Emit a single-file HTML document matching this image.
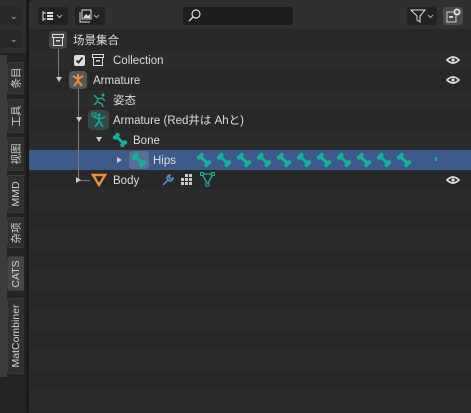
<!DOCTYPE html>
<html><head><meta charset="utf-8"><style>
*{margin:0;padding:0;box-sizing:border-box}
body{width:471px;height:413px;background:#1a1a1a;overflow:hidden;position:relative;font-family:"Liberation Sans","Noto Sans CJK SC",sans-serif;font-size:11.5px;color:#dcdcdc}
.a{position:absolute}
.row{position:absolute;left:29px;width:442px;height:20px}
.t{position:absolute;line-height:20px;white-space:nowrap;margin-top:1px}
.tab{position:absolute;left:7px;width:17px;background:#303030;border-radius:3px 0 0 3px;border:1px solid #3a3a3a;border-right:none}
.tab span{position:absolute;left:50%;top:50%;transform:translate(-50%,-50%) rotate(-90deg);white-space:nowrap;font-size:10.5px;color:#d0d0d0}
.eye{position:absolute;left:446px;width:14px;height:10px}
</style></head><body>
<svg width="0" height="0" style="position:absolute"><defs>
<g id="bone"><path d="M4 4 L12 12" stroke="#13b39b" stroke-width="3"/><circle cx="3" cy="5.5" r="2.2" fill="#13b39b"/><circle cx="5.5" cy="3" r="2.2" fill="#13b39b"/><circle cx="10.5" cy="13" r="2.2" fill="#13b39b"/><circle cx="13" cy="10.5" r="2.2" fill="#13b39b"/></g>
<g id="eye"><path d="M1 5 Q7 -1 13 5 Q7 11 1 5Z" fill="none" stroke="#e0e0e0" stroke-width="1.6"/><circle cx="7" cy="5" r="1.6" fill="#e0e0e0"/></g>
</defs></svg>
<!-- left strip -->
<div class="a" style="left:0;top:0;width:26px;height:413px;background:#232323"></div>
<div class="a" style="left:0;top:0;width:26px;height:53px;background:#2e2e2e"></div>
<div class="a" style="left:0;top:7px;width:22px;height:18px;background:#282828;border-radius:0 3px 3px 0;color:#bbb;font-size:9px;line-height:18px;padding-left:10px">⌄</div>
<div class="a" style="left:0;top:30px;width:22px;height:18px;background:#282828;border-radius:0 3px 3px 0;color:#bbb;font-size:9px;line-height:18px;padding-left:10px">⌄</div>
<div class="a" style="left:0;top:55px;width:7px;height:322px;background:#3c3c3c"></div>
<div class="tab" style="top:62px;height:32px"><span>条目</span></div>
<div class="tab" style="top:99px;height:34px"><span>工具</span></div>
<div class="tab" style="top:137px;height:34px"><span>视图</span></div>
<div class="tab" style="top:175px;height:38px"><span>MMD</span></div>
<div class="tab" style="top:217px;height:31px"><span>杂项</span></div>
<div class="tab" style="top:256px;height:35px;background:#454545"><span>CATS</span></div>
<div class="tab" style="top:298px;height:76px"><span>MatCombiner</span></div>
<!-- outliner -->
<div class="a" style="left:29px;top:0;width:442px;height:413px;background:#282828;border-radius:4px 0 0 0"></div>
<div class="a" style="left:29px;top:0;width:442px;height:29px;background:#303030;border-radius:4px 0 0 0"></div>
<div class="a" style="left:38px;top:7px;width:30px;height:18px;background:#222;border-radius:3px"></div>
<svg class="a" style="left:42px;top:10px" width="24" height="12"><path d="M1 1v10M1 3h3M1 9h3" stroke="#ddd" fill="none"/><rect x="5" y="2" width="6" height="2" fill="#ddd"/><rect x="5" y="5" width="6" height="2" fill="#ddd"/><rect x="5" y="8" width="6" height="2" fill="#ddd"/><path d="M15 5l2.5 2.5 2.5-2.5" stroke="#aaa" fill="none"/></svg>
<div class="a" style="left:75px;top:7px;width:30px;height:18px;background:#222;border-radius:3px"></div>
<svg class="a" style="left:79px;top:9px" width="24" height="14"><rect x="3" y="1" width="9" height="9" fill="none" stroke="#ddd"/><path d="M1 3v10h10" stroke="#ddd" fill="none"/><path d="M4 9l3-4 2 2 2-2v4z" fill="#ddd"/><path d="M15 6l2.5 2.5 2.5-2.5" stroke="#aaa" fill="none"/></svg>
<div class="a" style="left:183px;top:7px;width:110px;height:18px;background:#1d1d1d;border-radius:3px"></div>
<svg class="a" style="left:188px;top:9px" width="14" height="14"><circle cx="8" cy="5" r="4" fill="none" stroke="#ddd" stroke-width="1.2"/><path d="M5 8l-4 4" stroke="#ddd" stroke-width="1.4"/></svg>
<div class="a" style="left:407px;top:7px;width:30px;height:18px;background:#222;border-radius:3px"></div>
<svg class="a" style="left:410px;top:9px" width="26" height="14"><path d="M1 1h14l-5 6v6l-3-2v-4z" fill="none" stroke="#ddd"/><path d="M18 6l2.5 2.5 2.5-2.5" stroke="#aaa" fill="none"/></svg>
<div class="a" style="left:443px;top:7px;width:20px;height:18px;background:#4a4a4a;border-radius:3px"></div>
<svg class="a" style="left:445px;top:8px" width="18" height="16"><rect x="2" y="4" width="9" height="10" fill="none" stroke="#ccc"/><rect x="4" y="8" width="4" height="2" fill="#ccc"/><circle cx="12" cy="4" r="3.5" fill="#ddd"/><path d="M12 2v4M10 4h4" stroke="#333"/></svg>
<!-- rows -->
<div class="row" style="top:50px;background:#2b2b2b"></div>
<div class="row" style="top:90px;background:#2b2b2b"></div>
<div class="row" style="top:130px;background:#2b2b2b"></div>
<div class="row" style="top:150px;background:#3e5a8b"></div>
<div class="row" style="top:190px;background:#2b2b2b"></div>
<div class="row" style="top:230px;background:#2b2b2b"></div>
<div class="row" style="top:270px;background:#2b2b2b"></div>
<div class="row" style="top:310px;background:#2b2b2b"></div>
<div class="row" style="top:350px;background:#2b2b2b"></div>
<div class="row" style="top:390px;background:#2b2b2b"></div>
<!-- tree lines -->
<div class="a" style="left:58px;top:46px;width:1px;height:32px;background:#7a7a7a"></div>
<div class="a" style="left:78px;top:88px;width:1px;height:92px;background:#7a7a7a"></div>
<div class="a" style="left:78px;top:180px;width:12px;height:1px;background:#7a7a7a"></div>
<!-- row 1 -->
<div class="a" style="left:49px;top:31px;width:18px;height:18px;background:#444;border-radius:4px"></div>
<svg class="a" style="left:51px;top:33px" width="14" height="14"><rect x="1.5" y="1.5" width="11" height="3" fill="none" stroke="#ddd"/><path d="M2.5 4.5v8h9v-8" fill="none" stroke="#ddd"/><rect x="5" y="7" width="4" height="1.5" fill="#ddd"/></svg>
<div class="t" style="left:73px;top:30px">场景集合</div>
<!-- row 2 -->
<div class="a" style="left:74px;top:55px;width:11px;height:11px;background:#ddd;border-radius:2px"></div>
<svg class="a" style="left:75px;top:56px" width="9" height="9"><path d="M1.5 4.5l2 2 4-5" stroke="#222" stroke-width="1.8" fill="none"/></svg>
<svg class="a" style="left:91px;top:53px" width="14" height="14"><rect x="1.5" y="1.5" width="11" height="3" fill="none" stroke="#ddd"/><path d="M2.5 4.5v8h9v-8" fill="none" stroke="#ddd"/><rect x="5" y="7" width="4" height="1.5" fill="#ddd"/></svg>
<div class="t" style="left:113px;top:50px">Collection</div>
<svg class="eye" style="top:55px"><use href="#eye"/></svg>
<!-- row 3 -->
<div class="a" style="left:56px;top:77px;width:0;height:0;border-left:3px solid transparent;border-right:3px solid transparent;border-top:5px solid #ccc"></div>
<div class="a" style="left:69px;top:71px;width:18px;height:18px;background:#575757;border-radius:4px"></div>
<svg class="a" style="left:71px;top:73px" width="14" height="14"><path d="M2 3l5 3 5-3M7 1v7M3 13l4-5 4 5" stroke="#e8913d" stroke-width="2" fill="none"/></svg>
<div class="t" style="left:93px;top:70px">Armature</div>
<svg class="eye" style="top:75px"><use href="#eye"/></svg>
<!-- row 4 -->
<svg class="a" style="left:92px;top:93px" width="16" height="14"><circle cx="11" cy="2" r="1.5" fill="#13b39b"/><path d="M2 2l4 4 4-1 3 3M6 6l-1 3-3 3M6 9l4 2 1 3" stroke="#13b39b" stroke-width="1.4" fill="none"/></svg>
<div class="t" style="left:113px;top:90px">姿态</div>
<!-- row 5 -->
<div class="a" style="left:76px;top:117px;width:0;height:0;border-left:3px solid transparent;border-right:3px solid transparent;border-top:5px solid #ccc"></div>
<div class="a" style="left:88px;top:110px;width:21px;height:20px;background:#2f4a44;border:1px solid #444;border-radius:4px"></div>
<svg class="a" style="left:91px;top:112px" width="16" height="16"><rect x="1" y="1" width="4" height="3" fill="none" stroke="#13b39b"/><circle cx="8" cy="3" r="1.5" fill="#13b39b"/><path d="M3 5l5 2 6-2M8 4v5M4 15l4-6 4 6" stroke="#13b39b" stroke-width="1.4" fill="none"/></svg>
<div class="t" style="left:113px;top:110px">Armature (Red井は Ahと)</div>
<!-- row 6 -->
<div class="a" style="left:96px;top:137px;width:0;height:0;border-left:3px solid transparent;border-right:3px solid transparent;border-top:5px solid #ccc"></div>
<svg class="a" style="left:112px;top:132px" width="16" height="16"><use href="#bone"/></svg>
<div class="t" style="left:133px;top:130px">Bone</div>
<!-- row 7 Hips -->
<div class="a" style="left:117px;top:157px;width:0;height:0;border-top:3px solid transparent;border-bottom:3px solid transparent;border-left:5px solid #ccc"></div>
<div class="a" style="left:129px;top:151px;width:20px;height:18px;background:#5a6f96;border-radius:4px"></div>
<svg class="a" style="left:131px;top:152px" width="16" height="16"><use href="#bone"/></svg>
<div class="t" style="left:153px;top:150px">Hips</div>
<svg class="a" style="left:196px;top:152px" width="250" height="16">
<use href="#bone" x="0"/><use href="#bone" x="20"/><use href="#bone" x="40"/><use href="#bone" x="60"/><use href="#bone" x="80"/><use href="#bone" x="100"/><use href="#bone" x="120"/><use href="#bone" x="140"/><use href="#bone" x="160"/><use href="#bone" x="180"/><use href="#bone" x="200"/><rect x="239" y="5" width="2" height="4" fill="#13b39b"/></svg>
<!-- row 8 Body -->
<div class="a" style="left:76px;top:177px;width:0;height:0;border-top:3px solid transparent;border-bottom:3px solid transparent;border-left:5px solid #ccc"></div>
<svg class="a" style="left:91px;top:173px" width="16" height="14"><path d="M2 2h12l-6 10z" fill="none" stroke="#e8913d" stroke-width="2.4"/></svg>
<div class="t" style="left:113px;top:170px">Body</div>
<svg class="a" style="left:161px;top:173px" width="14" height="14"><path d="M2 12l6-6M9 2a3 3 0 1 0 3 3l-2 1-2-2z" stroke="#5a90d0" stroke-width="1.5" fill="none"/></svg>
<svg class="a" style="left:180px;top:173px" width="14" height="14" fill="#ccc"><rect x="5" y="1" width="3" height="3"/><rect x="9" y="1" width="3" height="3"/><rect x="1" y="5" width="3" height="3"/><rect x="5" y="5" width="3" height="3"/><rect x="9" y="5" width="3" height="3"/><rect x="1" y="9" width="3" height="3"/><rect x="5" y="9" width="3" height="3"/><rect x="9" y="9" width="3" height="3"/></svg>
<svg class="a" style="left:200px;top:172px" width="16" height="16"><path d="M2 2h11l-5.5 10z" fill="none" stroke="#13b39b" stroke-width="1.3"/><rect x="0.5" y="0.5" width="3" height="3" fill="#282828" stroke="#13b39b"/><rect x="11.5" y="0.5" width="3" height="3" fill="#282828" stroke="#13b39b"/><rect x="6" y="11" width="3" height="3" fill="#282828" stroke="#13b39b"/></svg>
<svg class="eye" style="top:175px"><use href="#eye"/></svg>
</body></html>
